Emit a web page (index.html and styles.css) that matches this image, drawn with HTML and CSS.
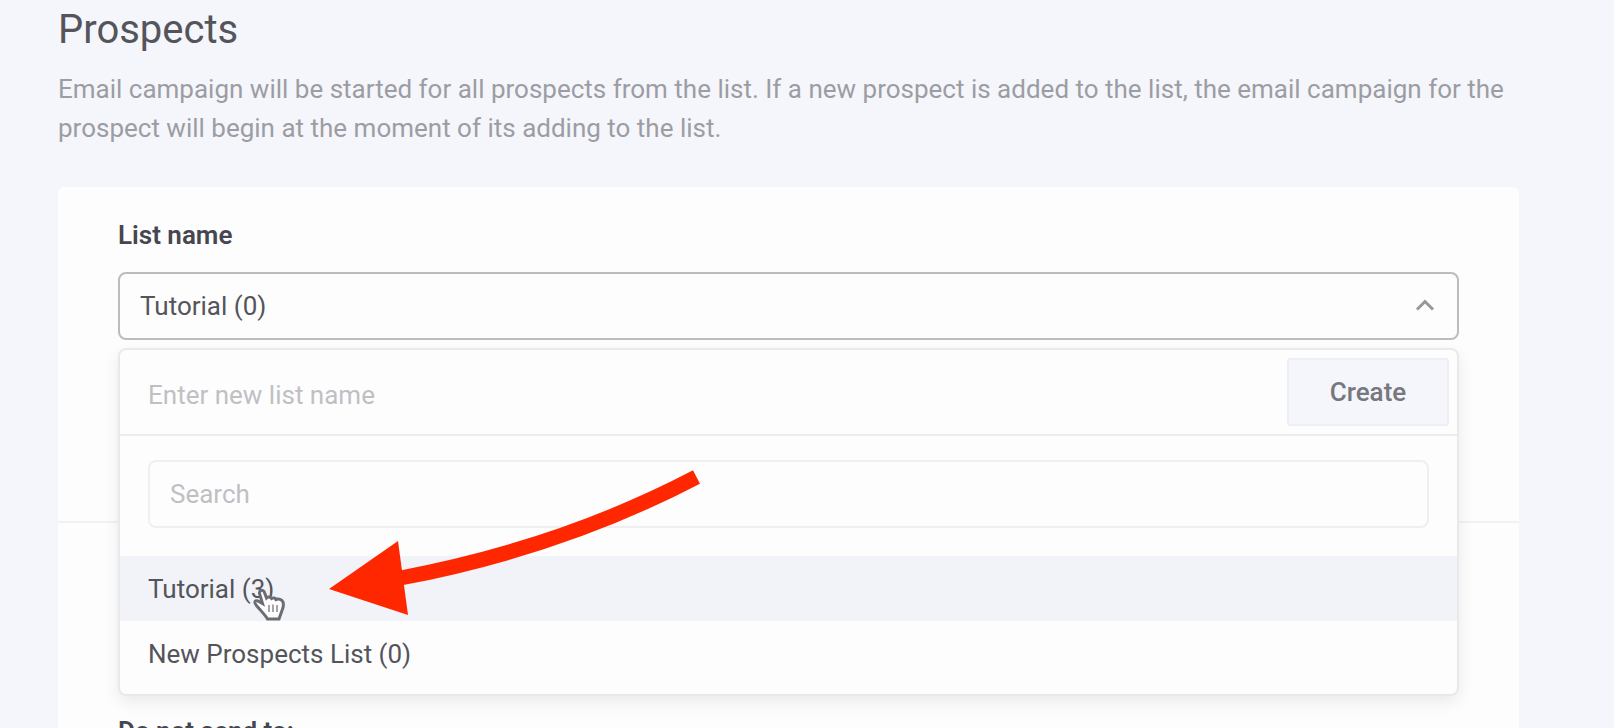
FILE: index.html
```html
<!DOCTYPE html>
<html lang="en">
<head>
<meta charset="utf-8">
<meta name="viewport" content="width=device-width, initial-scale=1">
<title>Prospects</title>
<link rel="stylesheet" href="styles.css">
</head>
<body>
<main class="page">
  <header class="intro">
    <h1 class="title">Prospects</h1>
    <p class="lead">Email campaign will be started for all prospects from the list. If a new prospect is added to the list, the email campaign for the prospect will begin at the moment of its adding to the list.</p>
  </header>
  <div class="card">
    <section class="section section-list">
      <label class="label" for="list">List name</label>
      <div class="picker">
        <div class="select-wrap">
          <select class="select" id="list">
            <option>Tutorial (0)</option>
          </select>
          <svg class="chevron" viewBox="0 0 20 14" aria-hidden="true"><path d="M2 11.500 10 3.500l8 8"/></svg>
        </div>
        <div class="dropdown">
          <form class="create-row">
            <input class="new-name" type="text" placeholder="Enter new list name" aria-label="New list name">
            <button class="create" type="button">Create</button>
          </form>
          <div class="search-row">
            <input class="search" type="text" placeholder="Search" aria-label="Search lists">
          </div>
          <ul class="options">
            <li><button class="option option-active" type="button">Tutorial (3)</button></li>
            <li><button class="option" type="button">New Prospects List (0)</button></li>
          </ul>
          <svg class="pointer" viewBox="0 0 34 34" aria-hidden="true">
            <path class="hand" d="M8 2.500C9.500 2 11 3 11.500 4.500L13.500 10c1.500-1.500 4-1 5 .5 1.500-1 4-.5 4.500 1 2.500-1 6 0 7 2.500.8 2.500.3 5.500-1 8.500L26 31H14.500C12.500 27.500 9 24 6 20.500 4.500 18.500 2.500 17 2 15c-.5-2.500 2-3 4-1.500l3.500 2L6.500 5.500C6.200 4 6.800 3 8 2.500z"/>
            <path class="fingers" d="M16 17v7M20 16.500v7.500M24 17v7"/>
          </svg>
          <svg class="arrow" viewBox="0 0 380 152" aria-hidden="true">
            <path class="arrow-shaft" d="M70 111.500Q233 81 368.500 10"/>
            <path class="arrow-head" d="M1 122 70 74l10 74z"/>
          </svg>
        </div>
      </div>
    </section>
    <section class="section section-exclude">
      <h2 class="label">Do not send to:</h2>
    </section>
  </div>
</main>
</body>
</html>
```

FILE: styles.css
```css
* {
  box-sizing: border-box;
}

html {
  height: 100%;
  overflow: hidden;
}

body {
  margin: 0;
  height: 100%;
  overflow: hidden;
  background: #f5f6fc;
  color: #54555b;
  font-family: Roboto, "Liberation Sans", sans-serif;
  font-size: 26px;
}

input,
select,
button {
  font: inherit;
  color: inherit;
}

.page {
  padding: 0 95px 0 58px;
}

.title {
  margin: 0;
  padding-top: 6px;
  font-size: 40px;
  font-weight: 400;
  line-height: 48px;
}

.lead {
  margin: 16px 0 0;
  color: #9c9da3;
  line-height: 39px;
}

.card {
  margin-top: 39px;
  border-radius: 6px;
  background: #fdfdfe;
}

.section {
  padding: 32px 60px;
}

.section-list {
  height: 336px;
  border-bottom: 2px solid #f2f2f4;
}

.section-exclude {
  padding-top: 192px;
}

.label {
  display: block;
  margin: 0;
  color: #45464f;
  font-size: 26px;
  font-weight: 600;
  line-height: 32px;
}

.picker {
  position: relative;
  margin-top: 21px;
}

.select-wrap {
  position: relative;
}

.select {
  display: block;
  width: 100%;
  height: 68px;
  padding: 0 20px;
  appearance: none;
  border: 2px solid #bcbcbf;
  border-radius: 8px;
  background: #fdfdfe;
}

.chevron {
  position: absolute;
  top: 26px;
  right: 24px;
  width: 20px;
  height: 14px;
  fill: none;
  stroke: #97979c;
  stroke-width: 3;
}

.dropdown {
  position: absolute;
  top: 76px;
  left: 0;
  right: 0;
  padding-bottom: 8px;
  border: 2px solid #e9e9eb;
  border-radius: 8px;
  background: #fdfdfe;
  box-shadow: 0 6px 16px rgba(0, 0, 0, 0.08);
}

.create-row {
  display: flex;
  padding: 8px 8px 8px 28px;
  border-bottom: 2px solid #ededef;
}

.new-name {
  flex: 1;
  min-width: 0;
  padding: 6px 0 0;
  border: 0;
  background: none;
}

.new-name::placeholder,
.search::placeholder {
  color: #c0c0c4;
  opacity: 1;
}

.create {
  width: 162px;
  height: 68px;
  border: 2px solid #efeff2;
  border-radius: 4px;
  background: #f5f6fb;
  color: #77787e;
  font-weight: 500;
}

.search-row {
  padding: 24px 28px 28px;
}

.search {
  display: block;
  width: 100%;
  height: 68px;
  padding: 0 20px;
  border: 2px solid #efeff1;
  border-radius: 8px;
  background: none;
}

.options {
  margin: 0;
  padding: 0;
  list-style: none;
}

.option {
  display: block;
  width: 100%;
  height: 65px;
  padding: 0 28px;
  border: 0;
  background: none;
  text-align: left;
}

.option-active {
  background: #f2f3f8;
}

.pointer {
  position: absolute;
  top: 238px;
  left: 133px;
  width: 34px;
  height: 34px;
}

.hand {
  fill: #fdfdfe;
  stroke: #6c6d73;
  stroke-width: 3;
}

.fingers {
  fill: none;
  stroke: #a5a5ac;
  stroke-width: 2;
}

.arrow {
  position: absolute;
  top: 117px;
  left: 208px;
  width: 380px;
  height: 152px;
}

.arrow-shaft {
  fill: none;
  stroke: #ff2700;
  stroke-width: 15;
}

.arrow-head {
  fill: #ff2700;
}
```
